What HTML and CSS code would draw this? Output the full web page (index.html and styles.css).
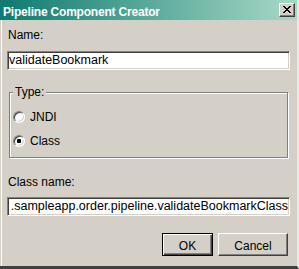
FILE: index.html
```html
<!DOCTYPE html>
<html lang="en">
<head>
    <meta charset="UTF-8">
    <title>Pipeline Component Creator</title>
    <link rel="stylesheet" href="styles.css">
</head>
<body>
    <div class="dialog">
        <div class="titlebar">
            <span class="title">Pipeline Component Creator</span>
            <button class="close-btn" aria-label="Close">
                <svg width="8" height="7" viewBox="0 0 8 7" shape-rendering="crispEdges">
                    <path d="M0 0h2v1H0zM6 0h2v1H6zM1 1h2v1H1zM5 1h2v1H5zM2 2h4v1H2zM3 3h2v1H3zM2 4h4v1H2zM1 5h2v1H1zM5 5h2v1H5zM0 6h2v1H0zM6 6h2v1H6z" fill="#000"/>
                </svg>
            </button>
        </div>
        <div class="content">
            <div class="label">Name:</div>
            <div class="field">validateBookmark</div>

            <fieldset class="group">
                <legend>Type:</legend>
                <div class="radio-row"><span class="radio"></span>JNDI</div>
                <div class="radio-row"><span class="radio checked"></span>Class</div>
            </fieldset>

            <div class="label label-class">Class name:</div>
            <div class="field field-end"><span>.sampleapp.order.pipeline.validateBookmarkClass</span></div>

            <div class="buttons">
                <button class="btn btn-default">OK</button>
                <button class="btn btn-cancel">Cancel</button>
            </div>
        </div>
    </div>
</body>
</html>
```

FILE: styles.css
```css
body {
    margin: 0;
    font-family: 'Liberation Sans', Arial, sans-serif;
    font-size: 12px;
    color: #000;
    background-color: #d4d0c8;
}
.dialog {
    width: 299px;
    height: 269px;
    box-sizing: border-box;
    display: flex;
    flex-direction: column;
    background-color: #d4d0c8;
    border-right: 2px solid #ebe9e4;
    border-bottom: 3px solid #404040;
}
.titlebar {
    height: 20px;
    display: flex;
    align-items: flex-start;
    justify-content: space-between;
    background: linear-gradient(to right, #0e7a70, #a8d8c6);
}
.title {
    padding: 5px 0 0 3px;
    line-height: 14px;
    color: #fff;
    font-weight: bold;
    letter-spacing: -0.2px;
    white-space: nowrap;
}
.close-btn {
    width: 16px;
    height: 14px;
    margin: 3px 2px 0 0;
    padding: 0 1px 1px 0;
    display: flex;
    align-items: center;
    justify-content: center;
    background-color: #d4d0c8;
    border: 1px solid;
    border-color: #fff #404040 #404040 #fff;
    box-shadow: inset -1px -1px 0 #808080;
}
.content {
    flex: 1;
    display: flex;
    flex-direction: column;
    padding: 0 7px 0 7px;
    box-shadow: inset 1px 0 0 #d4d0c8, inset 2px 0 0 #fff;
}
.label {
    margin-top: 8px;
    line-height: 14px;
    padding-left: 1px;
}
.label-class {
    margin-top: 17px;
}
.field {
    margin-top: 9px;
    height: 19px;
    box-sizing: border-box;
    padding: 0 0 0 1px;
    background-color: #fff;
    border: 1px solid;
    border-color: #808080 #fff #fff #808080;
    box-shadow: inset 1px 1px 0 #404040, inset -1px -1px 0 #d4d0c8;
    font-size: 12.5px;
    line-height: 17px;
    white-space: nowrap;
    overflow: hidden;
}
.field-end {
    margin-top: 8px;
    display: flex;
    justify-content: flex-end;
    padding: 0 1px 0 1px;
}
.group {
    margin: 16px 2px 0 2px;
    padding: 6px 3px 4px 3px;
    border: 1px solid #808080;
    box-shadow: inset 1px 1px 0 #fff, 1px 1px 0 #fff;
    min-width: 0;
}
.group legend {
    padding: 0 2px;
    line-height: 13px;
    background-color: #d4d0c8;
}
.radio-row {
    height: 24px;
    display: flex;
    align-items: center;
    gap: 5px;
}
.radio {
    width: 12px;
    height: 12px;
    box-sizing: border-box;
    border-radius: 50%;
    border: 1px solid;
    border-color: #808080 #fff #fff #808080;
    box-shadow: inset 1px 1px 0 #404040, inset -1px -1px 0 #d4d0c8;
    background-color: #fff;
    display: flex;
    align-items: center;
    justify-content: center;
}
.radio.checked::after {
    content: "";
    width: 4px;
    height: 4px;
    border-radius: 1px;
    background-color: #000;
}
.buttons {
    margin-top: 17px;
    display: flex;
    justify-content: flex-end;
    gap: 5px;
    padding-right: 2px;
}
.btn {
    height: 23px;
    box-sizing: border-box;
    padding: 2px 0 0 0;
    font-family: 'Liberation Sans', Arial, sans-serif;
    font-size: 12px;
    color: #000;
    background-color: #d4d0c8;
    border: 1px solid;
    border-color: #fff #404040 #404040 #fff;
    box-shadow: inset -1px -1px 0 #808080;
}
.btn-default {
    width: 51px;
    border-color: #000;
    box-shadow: inset 1px 1px 0 #fff, inset -1px -1px 0 #404040, inset -2px -2px 0 #808080;
}
.btn-cancel {
    width: 70px;
}
```
